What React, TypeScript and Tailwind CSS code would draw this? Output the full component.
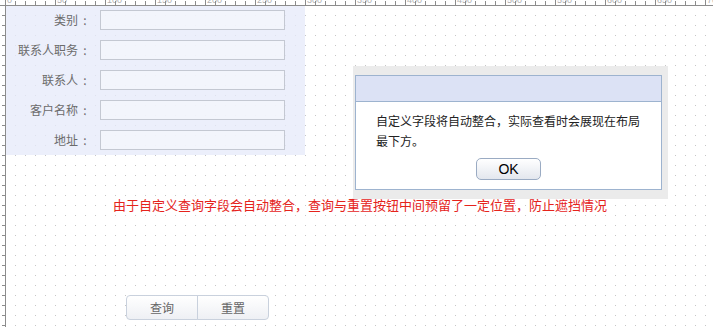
import React from "react";

const FIELDS = ["类别", "联系人职务", "联系人", "客户名称", "地址"];

const CJK = "font-['Noto_Sans_CJK_SC',sans-serif]";

function TopRuler() {
  const ticks = [];
  for (let x = 5; x < 713; x += 10) {
    const major = (x - 5) % 50 === 0;
    ticks.push(
      <line key={x} x1={x + 0.5} x2={x + 0.5} y1={major ? 0 : 1} y2={5} stroke="#8c8c8c" strokeWidth={1} />
    );
    if (major) {
      ticks.push(
        <text key={"t" + x} x={x + 2} y={3} fontSize={9} fill="#b0b0b0" fontFamily="Liberation Sans, sans-serif">
          {x - 5}
        </text>
      );
    }
  }
  return (
    <svg width={713} height={6} className="block shrink-0">
      {ticks}
      <line x1={0} x2={713} y1={5.5} y2={5.5} stroke="#8c8c8c" strokeWidth={1} />
    </svg>
  );
}

function LeftRuler() {
  const ticks = [];
  for (let y = 9; y < 327; y += 10) {
    ticks.push(<line key={y} x1={2} x2={5} y1={y + 0.5} y2={y + 0.5} stroke="#8c8c8c" strokeWidth={1} />);
  }
  return (
    <svg width={6} height={321} className="block shrink-0">
      {ticks}
      <line x1={5.5} x2={5.5} y1={0} y2={321} stroke="#8c8c8c" strokeWidth={1} />
    </svg>
  );
}

function DotGrid() {
  return (
    <svg className="absolute inset-0 h-full w-full" aria-hidden>
      <defs>
        <pattern id="dots" width={10} height={10} patternUnits="userSpaceOnUse" x={0} y={0}>
          <rect x={9} y={9} width={1} height={1} fill="#c6c6c6" />
        </pattern>
      </defs>
      <rect width="100%" height="100%" fill="url(#dots)" />
    </svg>
  );
}

export default function App() {
  return (
    <div className={`w-[713px] h-[327px] overflow-hidden bg-white flex flex-col ${CJK}`}>
      <TopRuler />
      <div className="flex flex-1">
        <LeftRuler />
        <div className="relative flex-1">
          <DotGrid />
          <div className="relative flex flex-col">
            {/* query form */}
            <div className="w-[299px] bg-[#e6eaf9]/75 pt-[4px] pb-[5px] flex flex-col gap-[10px]">
              {FIELDS.map((f) => (
                <div key={f} className="flex items-center h-[20px]">
                  <span className="w-[72px] text-right text-[12px] leading-[20px] text-[#6b6b6b]">{f}</span>
                  <span className="w-[14px] text-center text-[12px] leading-[20px] text-[#6b6b6b]">:</span>
                  <div className="ml-[8px] w-[185px] h-[20px] border border-[#c4c8d2] bg-[#f8f9fd]/60" />
                </div>
              ))}
            </div>

            <p className="mt-[42px] ml-[107px] text-[13px] leading-[16px] text-[#e5231c] whitespace-nowrap">
              由于自定义查询字段会自动整合，查询与重置按钮中间预留了一定位置，防止遮挡情况
            </p>

            <div className="mt-[82px] ml-[120px] flex">
              <button className="w-[72px] h-[25px] rounded-l-[4px] border border-[#c9d1dd] bg-gradient-to-b from-white to-[#eef0f4] text-[12px] text-[#666]">
                查询
              </button>
              <button className="w-[72px] h-[25px] -ml-px rounded-r-[4px] border border-[#c9d1dd] bg-gradient-to-b from-white to-[#eef0f4] text-[12px] text-[#666]">
                重置
              </button>
            </div>
          </div>

          {/* message dialog */}
          <div className="absolute left-[347px] top-[60px] w-[315px] h-[133px] bg-[#ebebeb] pl-[2px] pt-[9px]">
            <div className="w-[307px] h-[115px] border border-[#9db3cf] bg-white flex flex-col">
              <div className="h-[26px] shrink-0 bg-[#dce2f5] border-b border-[#9db3cf]" />
              <p className="px-[20px] pt-[9px] text-[12px] leading-[20px] text-[#222]">
                自定义字段将自动整合，实际查看时会展现在布局最下方。
              </p>
              <div className="flex justify-center pt-[7px]">
                <button className="w-[65px] h-[22px] rounded-[5px] border border-[#9aabc3] bg-gradient-to-b from-white to-[#e3e7ee] text-[14px] text-black font-['Liberation_Sans',sans-serif]">
                  OK
                </button>
              </div>
            </div>
          </div>
        </div>
      </div>
    </div>
  );
}
